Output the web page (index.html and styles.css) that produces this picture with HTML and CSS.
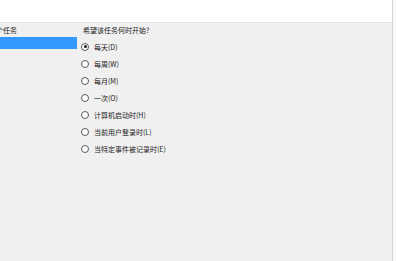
FILE: index.html
```html
<!DOCTYPE html>
<html lang="zh-CN">
<head>
<meta charset="utf-8">
<link rel="stylesheet" href="styles.css">
</head>
<body>
<div class="window">
  <div class="main">
    <div class="header"></div>
    <div class="content">
      <div class="nav">
        <div class="nav-title"><span>个任务</span></div>
        <div class="nav-item selected"></div>
      </div>
      <div class="form">
        <div class="question">希望该任务何时开始?</div>
        <div class="options">
          <label class="option"><span class="radio checked"></span>每天(D)</label>
          <label class="option"><span class="radio"></span>每周(W)</label>
          <label class="option"><span class="radio"></span>每月(M)</label>
          <label class="option"><span class="radio"></span>一次(O)</label>
          <label class="option"><span class="radio"></span>计算机启动时(H)</label>
          <label class="option"><span class="radio"></span>当前用户登录时(L)</label>
          <label class="option"><span class="radio"></span>当特定事件被记录时(E)</label>
        </div>
      </div>
    </div>
  </div>
  <div class="edge"></div>
</div>
</body>
</html>
```

FILE: styles.css
```css
html, body {
  margin: 0;
  padding: 0;
}
body {
  width: 396px;
  height: 261px;
  overflow: hidden;
  background: #f0f0f0;
  font-family: "Noto Sans CJK SC", "Noto Sans", sans-serif;
  font-size: 7px;
  color: #1a1a1a;
}
.window {
  display: flex;
  height: 261px;
}
.main {
  flex: 1;
  display: flex;
  flex-direction: column;
}
.header {
  height: 22px;
  background: #ffffff;
  border-bottom: 1px solid #e6e6e6;
  flex: none;
}
.content {
  display: flex;
  flex: 1;
}
.nav {
  width: 77px;
  flex: none;
  overflow: hidden;
}
.nav-title {
  height: 14px;
  line-height: 14px;
  white-space: nowrap;
}
.nav-title span {
  display: inline-block;
  margin-left: -4px;
}
.nav-item {
  height: 12px;
}
.nav-item.selected {
  background: #3399ff;
}
.form {
  padding-left: 6px;
  display: flex;
  flex-direction: column;
}
.question {
  height: 13px;
  line-height: 13px;
  margin-top: 1px;
}
.options {
  display: flex;
  flex-direction: column;
  margin-top: 1px;
  margin-left: -2px;
}
.option {
  display: flex;
  align-items: center;
  gap: 5px;
  height: 17px;
  white-space: nowrap;
}
.radio {
  width: 6px;
  height: 6px;
  border: 1px solid #5a5a5a;
  border-radius: 50%;
  background: #ffffff;
  position: relative;
  flex: none;
}
.radio.checked::after {
  content: "";
  position: absolute;
  left: 1.5px;
  top: 1.5px;
  width: 3px;
  height: 3px;
  border-radius: 50%;
  background: #1a1a1a;
}
.edge {
  width: 3px;
  flex: none;
  border-left: 1px solid #d6d6d6;
  background: #f9f9f9;
}
```
